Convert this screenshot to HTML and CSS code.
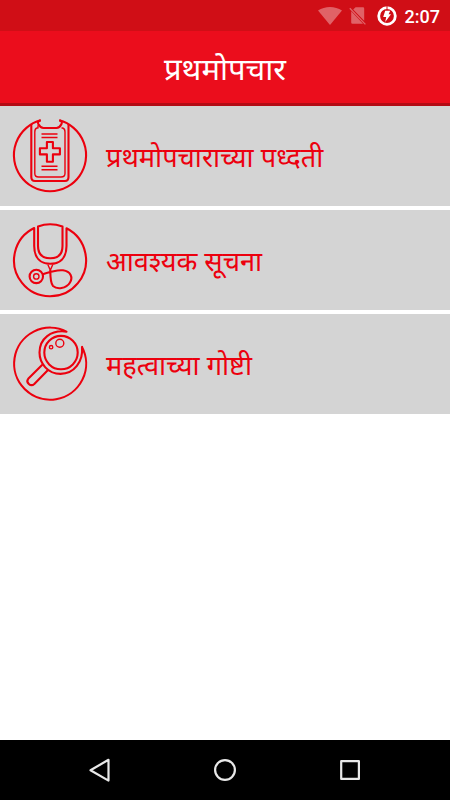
FILE: index.html
```
<!DOCTYPE html>
<html lang="mr">
<head>
  <meta charset="UTF-8">
  <meta name="viewport" content="width=device-width, initial-scale=1.0">
  <title>प्रथमोपचार</title>
  <link rel="stylesheet" href="styles.css">
</head>
<body>
  <div class="status-bar">
    <svg class="status-icon wifi" width="24" height="18" viewBox="0 0 24 18">
      <path d="M0 3.6C7-1.2 17-1.2 24 3.6L12 18z"/>
    </svg>
    <svg class="status-icon sim" width="18" height="19" viewBox="0 0 18 19">
      <path d="M4.2 3.6L6.6 1.3H14q1.2 0 1.2 1.2v12.3zM2.2 5.2L14 17.7H3.5q-1.3 0-1.3-1.3z"/>
      <path class="slash" d="M.8 2.2L16.4 18.4"/>
    </svg>
    <svg class="status-icon battery" width="20" height="20" viewBox="0 0 20 20">
      <circle cx="10" cy="10" r="8.3"/>
      <path class="tick" d="M10 0v3.5"/>
      <path class="bolt" d="M8.2 4.8H13.2L11.6 8.3H14L8.2 15.9L9.2 11H6.2z"/>
    </svg>
    <span class="clock">2:07</span>
  </div>
  <header class="toolbar">
    <h1 class="title">प्रथमोपचार</h1>
  </header>
  <main class="content">
    <ul class="menu">
      <li class="menu-item">
        <svg class="menu-icon" width="100" height="100" viewBox="0.5 0 100 100">
          <path d="M41.2 14.3A36.1 36.1 0 1 0 59.8 14.3"/>
          <path d="M41.2 14.3Q37.5 15.5 38.8 18Q41 22 44 22H57Q60 22 62 18Q63.3 15.5 59.8 14.3"/>
          <path d="M31.8 18V71Q31.8 75 35.5 75H65.5Q69 75 69 71V18"/>
          <path class="thin" d="M38.5 19.2V22H37.5Q35.3 22.5 35.3 26V67.5Q35.3 71 39 71H61.5Q65.5 71 65.5 67.5V26Q65.5 22.5 63 22H62"/>
          <path class="thin" d="M42 28H58M42 31.5H58M42 60.2H58M42 63.8H58"/>
          <path d="M47.4 36H53.4V42.3H60.4V48.4H53.4V55.8H47.4V48.4H40.4V42.3H47.4z"/>
        </svg>
        <span class="menu-text">प्रथमोपचाराच्या पध्दती</span>
      </li>
      <li class="menu-item">
        <svg class="menu-icon" width="100" height="100" viewBox="0 0 100 100">
          <path d="M34.2 18A36 36 0 1 0 66.5 18.3V36C66.5 48 60 53.8 50.2 53.8S34.2 48 34.2 36z"/>
          <path d="M38 16.5Q50 12 62.5 16.5V36Q62.5 48.3 50.3 48.3T38 36z"/>
          <path class="thin" d="M47.8 54.5L50.3 60.3L52.8 54.5"/>
          <circle cx="36.3" cy="66.4" r="6.7"/>
          <circle class="thin" cx="36.3" cy="66.4" r="2.7"/>
          <path d="M42.3 64.5C51 61.5 56 59.5 63 60.3C71 61.5 73 67.5 70 72.5C66 79 57 79.5 53 76Q50.3 73 50.3 60"/>
        </svg>
        <span class="menu-text">आवश्यक सूचना</span>
      </li>
      <li class="menu-item">
        <svg class="menu-icon" width="100" height="100" viewBox="0 0.4 100 100">
          <path d="M66.5 18A36 36 0 1 0 82 33.3C83.5 48 74 60.3 60.5 60.3C48 60.3 39.5 50 39.5 39C39.5 25 51 16 66.5 18z"/>
          <circle cx="61" cy="39" r="16.7"/>
          <circle class="thin" cx="59.8" cy="29.7" r="4"/>
          <circle class="thin" cx="51.1" cy="33.6" r="1.7"/>
          <path d="M42.3 51.2L28.2 65.2C25.5 68.5 30.5 73.8 34.3 70.3L48 56.3"/>
        </svg>
        <span class="menu-text">महत्वाच्या गोष्टी</span>
      </li>
    </ul>
  </main>
  <nav class="nav-bar">
    <svg class="nav-icon" width="24" height="26" viewBox="0 0 24 26">
      <path d="M20.5 2.8V23.6L2.5 13.2z"/>
    </svg>
    <svg class="nav-icon" width="24" height="26" viewBox="0 0 24 26">
      <circle cx="12" cy="13" r="9.9"/>
    </svg>
    <svg class="nav-icon" width="24" height="26" viewBox="0 0 24 26">
      <path d="M3.2 4.2H20.9V21.9H3.2z"/>
    </svg>
  </nav>
</body>
</html>
```

FILE: styles.css
```
body {
  margin: 0;
  height: 800px;
  display: flex;
  flex-direction: column;
  background: white;
  font-family: "Noto Sans Devanagari", "Noto Sans", Roboto, sans-serif;
  overflow: hidden;
}

.status-bar {
  height: 31px;
  box-sizing: border-box;
  padding-right: 10px;
  display: flex;
  justify-content: flex-end;
  align-items: center;
  background: #d00e16;
}

.status-icon {
  fill: white;
}

.wifi {
  opacity: 0.35;
  margin-right: 7px;
}

.sim {
  opacity: 0.35;
  margin-right: 10px;
}

.slash {
  stroke: white;
  stroke-width: 1.3;
}

.battery {
  margin-right: 8px;
}

.battery circle {
  fill: none;
  stroke: white;
  stroke-width: 2.8;
}

.tick {
  stroke: #d00e16;
  stroke-width: 1;
}

.clock {
  color: white;
  font-family: Roboto, sans-serif;
  font-size: 18px;
  font-weight: 500;
  line-height: 31px;
  padding-top: 2px;
}

.toolbar {
  height: 75px;
  box-sizing: border-box;
  border-bottom: 3px solid #b30b14;
  padding-top: 12px;
  display: flex;
  justify-content: center;
  align-items: center;
  background: #eb0d1c;
}

.title {
  margin: 0;
  color: white;
  font-size: 31px;
  font-weight: 400;
  line-height: 40px;
}

.content {
  flex: 1;
}

.menu {
  list-style: none;
  margin: 0;
  padding: 0;
  display: flex;
  flex-direction: column;
  gap: 4px;
}

.menu-item {
  height: 100px;
  display: flex;
  align-items: center;
  background: #d4d4d4;
}

.menu-icon {
  margin-right: 6px;
  fill: none;
  stroke: #ec000e;
  stroke-width: 2.1;
  stroke-linejoin: round;
}

.thin {
  stroke-width: 1.4;
}

.menu-text {
  padding-top: 9px;
  color: #ec000e;
  font-size: 27.2px;
  line-height: 40px;
}

.nav-bar {
  height: 60px;
  display: flex;
  justify-content: center;
  align-items: center;
  gap: 101px;
  background: black;
}

.nav-icon {
  fill: none;
  stroke: #e8e8e8;
  stroke-width: 2.2;
  stroke-linejoin: round;
}
```
